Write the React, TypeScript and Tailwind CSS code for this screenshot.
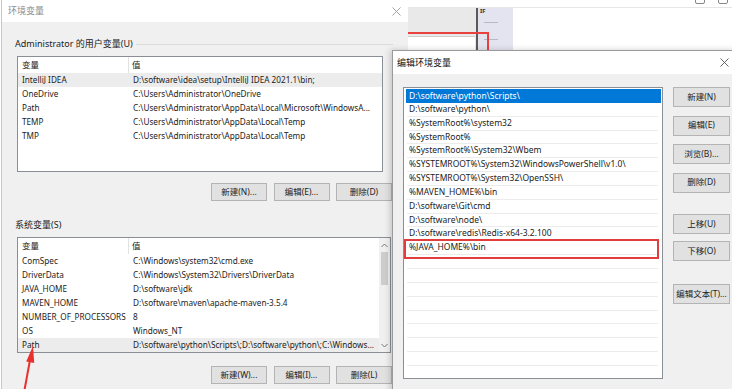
import React from "react";

const userVars = [
  ["IntelliJ IDEA", "D:\\software\\idea\\setup\\IntelliJ IDEA 2021.1\\bin;"],
  ["OneDrive", "C:\\Users\\Administrator\\OneDrive"],
  ["Path", "C:\\Users\\Administrator\\AppData\\Local\\Microsoft\\WindowsA..."],
  ["TEMP", "C:\\Users\\Administrator\\AppData\\Local\\Temp"],
  ["TMP", "C:\\Users\\Administrator\\AppData\\Local\\Temp"],
];

const sysVars = [
  ["ComSpec", "C:\\Windows\\system32\\cmd.exe"],
  ["DriverData", "C:\\Windows\\System32\\Drivers\\DriverData"],
  ["JAVA_HOME", "D:\\software\\jdk"],
  ["MAVEN_HOME", "D:\\software\\maven\\apache-maven-3.5.4"],
  ["NUMBER_OF_PROCESSORS", "8"],
  ["OS", "Windows_NT"],
  ["Path", "D:\\software\\python\\Scripts\\;D:\\software\\python\\;C:\\Windows..."],
];

const paths = [
  "D:\\software\\python\\Scripts\\",
  "D:\\software\\python\\",
  "%SystemRoot%\\system32",
  "%SystemRoot%",
  "%SystemRoot%\\System32\\Wbem",
  "%SYSTEMROOT%\\System32\\WindowsPowerShell\\v1.0\\",
  "%SYSTEMROOT%\\System32\\OpenSSH\\",
  "%MAVEN_HOME%\\bin",
  "D:\\software\\Git\\cmd",
  "D:\\software\\node\\",
  "D:\\software\\redis\\Redis-x64-3.2.100",
  "%JAVA_HOME%\\bin",
];

function WinButton({ label, className = "" }: { label: string; className?: string }) {
  return (
    <div
      className={`flex items-center justify-center bg-[#e1e1e1] border border-[#b4b4b4] text-[8.5px] text-[#222] ${className}`}
    >
      {label}
    </div>
  );
}

function CloseX({ className = "" }: { className?: string }) {
  return (
    <svg width="9" height="9" viewBox="0 0 9 9" className={className}>
      <path d="M0.5 0.5 L8.5 8.5 M8.5 0.5 L0.5 8.5" stroke="currentColor" strokeWidth="0.9" />
    </svg>
  );
}

function VarList({
  rows,
  highlight,
  className,
  scroll,
}: {
  rows: string[][];
  highlight: number;
  className: string;
  scroll?: boolean;
}) {
  return (
    <div className={`flex bg-white border border-[#8a8f96] overflow-hidden ${className}`}>
      <div className="flex-1 flex flex-col">
        <div className="flex h-[16px] items-center text-[8.5px] text-[#222]">
          <div className="w-[111px] h-full flex items-center pl-[4px] border-r border-[#e2e2e2]">变量</div>
          <div className="pl-[3px]">值</div>
        </div>
        {rows.map(([name, value], i) => (
          <div
            key={name + i}
            className={`flex h-[14px] items-center text-[8.2px] text-[#222] whitespace-nowrap ${
              i === highlight ? "bg-[#ececec]" : ""
            }`}
          >
            <div className="w-[112px] pl-[4px]">{name}</div>
            <div className="pl-[3px]">{value}</div>
          </div>
        ))}
      </div>
      {scroll && (
        <div className="w-[11px] bg-[#f0f0f0] flex flex-col items-center">
          <div className="h-[14px] flex items-center text-[#777]">
            <svg width="7" height="5" viewBox="0 0 7 5">
              <path d="M0.5 4 L3.5 1 L6.5 4" fill="none" stroke="currentColor" strokeWidth="1" />
            </svg>
          </div>
          <div className="w-[7px] h-[33px] bg-[#cdcdcd]" />
          <div className="flex-1" />
          <div className="h-[14px] flex items-center text-[#777]">
            <svg width="7" height="5" viewBox="0 0 7 5">
              <path d="M0.5 1 L3.5 4 L6.5 1" fill="none" stroke="currentColor" strokeWidth="1" />
            </svg>
          </div>
        </div>
      )}
    </div>
  );
}

export default function App() {
  return (
    <div className="relative w-[732px] h-[389px] overflow-hidden bg-white font-['Noto_Sans','Noto_Sans_CJK_SC',sans-serif]">
      {/* window behind the dialogs */}
      <div className="absolute left-[408px] top-0 w-[324px] h-[8px] border-b border-[#e6e6e6] flex justify-end gap-[13px] pr-[4px]">
        <div className="w-[10px] h-[6px] -mt-[2px] border border-[#888] rounded-[2px]" />
        <div className="w-[10px] h-[6px] -mt-[2px] border border-[#888] rounded-[2px]" />
      </div>
      <div className="absolute left-[408px] top-[8px] w-[68px] h-[44px] bg-[#e9e9e9]" />
      <div className="absolute left-[408px] top-[36px] w-[67px] h-[16px] bg-white border-t border-[#cfcfcf]" />
      <div className="absolute left-[476px] top-[8px] w-[2px] h-[44px] bg-[#5a5a5a]" />
      <div className="absolute left-[478px] top-[8px] w-[35px] h-[44px] bg-[#e4e4f1] flex flex-col pl-[2px]">
        <span className="text-[6px] leading-[7px] font-bold text-[#333]">IF</span>
        <div className="mt-[7px] ml-[4px] w-[14px] h-px bg-[#b8b8c8]" />
        <div className="mt-[16px] ml-[4px] w-[14px] h-px bg-[#b8b8c8]" />
      </div>
      <div className="absolute left-[408px] top-[32px] w-[81px] h-[2px] bg-[#e8423f]" />
      <div className="absolute left-[487px] top-[32px] w-[2px] h-[22px] bg-[#e8423f]" />

      {/* 环境变量 dialog */}
      <div className="absolute left-[1px] top-0 w-[407px] h-[389px] bg-[#f0f0f0] border-l border-[#c6c6c6] flex flex-col">
        <div className="h-[22px] bg-white flex items-center justify-between pl-[6px] pr-[7px]">
          <span className="text-[9px] text-[#8c8c8c]">环境变量</span>
          <CloseX className="text-[#9a9a9a]" />
        </div>
        <div className="flex flex-col pl-[13px] pr-[15px]">
          <div className="mt-[16px] h-[12px] flex items-center text-[9px] text-[#222]">
            <span className="whitespace-nowrap">Administrator 的用户变量(U)</span>
            <div className="flex-1 h-px bg-[#dcdcdc] ml-[3px]" />
          </div>
          <VarList rows={userVars} highlight={0} className="mt-[6px] ml-[2px] w-[366px] h-[116px]" />
          <div className="mt-[11px] flex justify-end gap-[6.5px] mr-[1px]">
            <WinButton label="新建(N)..." className="w-[56px] h-[18px]" />
            <WinButton label="编辑(E)..." className="w-[56px] h-[18px]" />
            <WinButton label="删除(D)" className="w-[56px] h-[18px]" />
          </div>
          <div className="mt-[18px] h-[12px] flex items-center text-[9px] text-[#222]">系统变量(S)</div>
          <VarList rows={sysVars} highlight={6} scroll className="mt-[6px] ml-[2px] w-[374px] h-[116px]" />
          <div className="mt-[13px] flex justify-end gap-[6.5px] mr-[1px]">
            <WinButton label="新建(W)..." className="w-[56px] h-[18px]" />
            <WinButton label="编辑(I)..." className="w-[56px] h-[18px]" />
            <WinButton label="删除(L)" className="w-[56px] h-[18px]" />
          </div>
        </div>
      </div>

      {/* red arrow annotation */}
      <svg className="absolute left-0 top-0" width="60" height="389" viewBox="0 0 60 389">
        <path d="M30 360 L24.5 390" stroke="#e8312f" strokeWidth="2" />
        <polygon points="33,346 26.2,361.5 34.2,363" fill="#e8312f" />
      </svg>

      {/* 编辑环境变量 dialog */}
      <div className="absolute left-[392px] top-[50px] w-[346px] h-[345px] bg-[#f0f0f0] border border-[#9a9a9a] shadow-[-2px_0_6px_rgba(0,0,0,0.18)] flex flex-col">
        <div className="h-[23px] bg-white flex items-center justify-between pl-[4px] pr-[8px]">
          <span className="text-[9px] text-[#111]">编辑环境变量</span>
          <CloseX className="text-[#555]" />
        </div>
        <div className="flex">
          <div className="mt-[13px] ml-[10px] w-[260px] h-[292px] bg-white border border-[#8a8f96] overflow-hidden pt-[1px] pr-[1px]">
            {Array.from({ length: 21 }).map((_, i) => {
              const text = paths[i];
              const selected = i === 0;
              const marked = i === paths.length - 1;
              return (
                <div
                  key={i}
                  className={`relative h-[13.85px] ${selected ? "bg-[#0078d7] ml-[2px]" : "ml-[0px]"}`}
                >
                  <div
                    className={`h-full flex items-center text-[8.5px] whitespace-nowrap ${
                      selected ? "pl-[3px] text-white" : "pl-[5px] text-[#222] mx-[3px] border-b border-[#ececec]"
                    }`}
                  >
                    <span className={selected ? "" : "-ml-[3px]"}>{text ?? ""}</span>
                  </div>
                  {marked && (
                    <div className="absolute left-0 right-[2px] -top-[2.5px] -bottom-[3.5px] border-2 border-[#e23d3d]" />
                  )}
                </div>
              );
            })}
          </div>
          <div className="ml-[10px] flex flex-col">
            <WinButton label="新建(N)" className="mt-[13px] w-[57px] h-[20px]" />
            <WinButton label="编辑(E)" className="mt-[8.5px] w-[57px] h-[20px]" />
            <WinButton label="浏览(B)..." className="mt-[8.5px] w-[57px] h-[20px]" />
            <WinButton label="删除(D)" className="mt-[8.5px] w-[57px] h-[20px]" />
            <WinButton label="上移(U)" className="mt-[21.5px] w-[57px] h-[20px]" />
            <WinButton label="下移(O)" className="mt-[7px] w-[57px] h-[20px]" />
            <WinButton label="编辑文本(T)..." className="mt-[23px] w-[57px] h-[20px]" />
          </div>
        </div>
      </div>
    </div>
  );
}
